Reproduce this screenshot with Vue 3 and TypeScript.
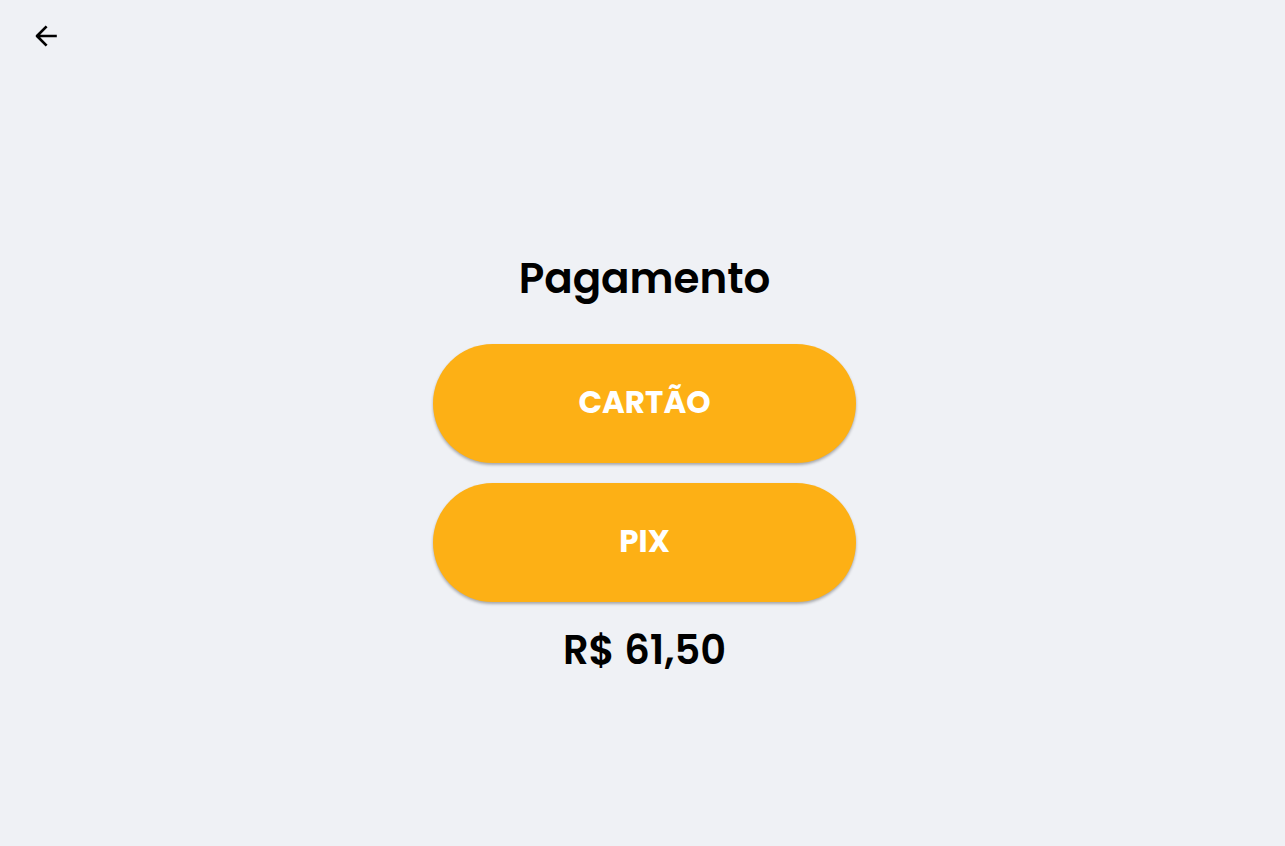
<script setup lang="ts">
import { ref } from 'vue'

interface PaymentMethod {
  id: string
  label: string
}

const methods: PaymentMethod[] = [
  { id: 'card', label: 'CARTÃO' },
  { id: 'pix', label: 'PIX' },
]

const total = ref(61.5)
const selected = ref<string | null>(null)

function formatPrice(value: number): string {
  return `R$ ${value.toFixed(2).replace('.', ',')}`
}

function goBack(): void {
  window.history.back()
}
</script>

<template>
  <div class="page">
    <header class="bar">
      <button class="back" type="button" aria-label="Voltar" @click="goBack">
        <svg viewBox="0 0 24 24" width="24" height="24" aria-hidden="true">
          <path
            d="M12.6 2.4 3 12l9.6 9.6M3 12h19.8"
            fill="none"
            stroke="#000"
            stroke-width="2.7"
            stroke-linejoin="round"
          />
        </svg>
      </button>
    </header>
    <main class="payment">
      <h1 class="title">Pagamento</h1>
      <div class="methods">
        <button
          v-for="method in methods"
          :key="method.id"
          class="method"
          type="button"
          @click="selected = method.id"
        >
          {{ method.label }}
        </button>
      </div>
      <p class="total">{{ formatPrice(total) }}</p>
    </main>
  </div>
</template>

<style>
body {
  margin: 0;
  background: #eff1f5;
}
</style>

<style scoped>
.page {
  display: flex;
  flex-direction: column;
  box-sizing: border-box;
  min-height: 100vh;
  background: #eff1f5;
  color: #000;
  font-family: Poppins, Inter, "Liberation Sans", sans-serif;
}

.bar {
  display: flex;
  align-items: center;
  height: 72px;
  padding-left: 26px;
}

.back {
  display: flex;
  align-items: center;
  justify-content: center;
  width: 40px;
  height: 40px;
  padding: 0;
  border: 0;
  border-radius: 50%;
  background: transparent;
  cursor: pointer;
}

.payment {
  flex: 1;
  display: flex;
  flex-direction: column;
  align-items: center;
  justify-content: center;
  padding: 11px 0 0 4px;
}

.title,
.total {
  margin: 0;
  font-weight: 600;
  line-height: 64px;
}

.title {
  font-size: 42px;
}

.total {
  font-size: 40px;
}

.methods {
  display: flex;
  flex-direction: column;
  gap: 20px;
  width: 33%;
  min-width: 280px;
  margin: 33px 0 16px;
}

.method {
  height: 119px;
  padding: 0 24px 2px;
  border: 0;
  border-radius: 60px;
  background: #fdb015;
  box-shadow: 0 2px 3px rgba(0, 0, 0, 0.3);
  color: #fff;
  font: inherit;
  font-size: 31px;
  font-weight: 700;
  cursor: pointer;
}
</style>
